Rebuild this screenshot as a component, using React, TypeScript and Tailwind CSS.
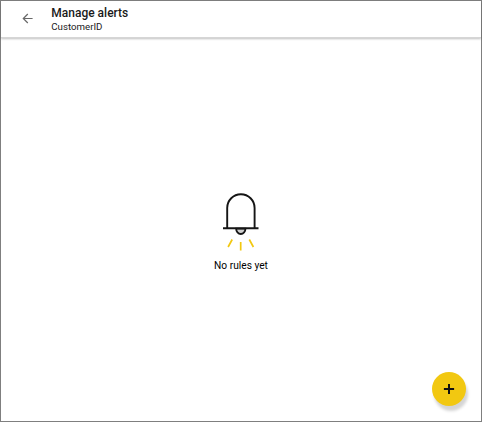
function BackButton() {
  return (
    <button aria-label="Back" className="ml-[21px] flex size-3">
      <svg width="12" height="12" viewBox="0 0 12 12" fill="none" stroke="#696969" strokeWidth="1.2">
        <path d="M10.6 6.5H1.4M5.8 2L1.3 6.5L5.8 11" />
      </svg>
    </button>
  );
}

function BellIllustration() {
  return (
    <svg width="38" height="60" viewBox="0 0 38 60" fill="none">
      <path d="M14.1 35.6a4.7 5.4 0 0 0 9.4 0z" fill="#cfcfcf" stroke="#151515" strokeWidth="1.8" />
      <path d="M5.2 35V14.9a13.7 13.7 0 0 1 27.4 0V35" stroke="#151515" strokeWidth="1.9" />
      <path d="M1 35.2H36.5" stroke="#151515" strokeWidth="2" />
      <path d="M10.2 46.5L6.1 54M18.7 49V57.6M27.3 46.5L31.4 54" stroke="#f2c811" strokeWidth="1.7" />
    </svg>
  );
}

export default function App() {
  return (
    <div className="flex h-[422px] w-[482px] flex-col border border-[#7f7f7f] bg-white font-[Roboto,sans-serif] text-[#1a1a1a]">
      <header className="flex h-[37px] shrink-0 border-b border-[#d6d6d6] shadow-[0_1px_2px_rgba(0,0,0,0.25)]">
        <div className="flex h-[34px] items-center">
          <BackButton />
        </div>
        <div className="ml-[17.3px] pt-[5px]">
          <h1 className="text-[12px] font-medium leading-[15px]">Manage alerts</h1>
          <p className="-mt-px text-[9.7px] leading-[13px]">CustomerID</p>
        </div>
      </header>
      <main className="flex grow flex-col items-center pt-[155px]">
        <BellIllustration />
        <p className="mt-[6px] text-[10.2px] leading-[14px] text-black">No rules yet</p>
        <button
          aria-label="Add alert rule"
          className="mb-[15px] mr-[15px] mt-auto flex size-[34px] items-center justify-center self-end rounded-full bg-[#f2c811] shadow-[2px_5px_3px_rgba(0,0,0,0.17)]"
        >
          <svg width="12" height="12" viewBox="0 0 12 12" stroke="#111" strokeWidth="2">
            <path d="M6 .9V11.1M.9 6H11.1" />
          </svg>
        </button>
      </main>
    </div>
  );
}
